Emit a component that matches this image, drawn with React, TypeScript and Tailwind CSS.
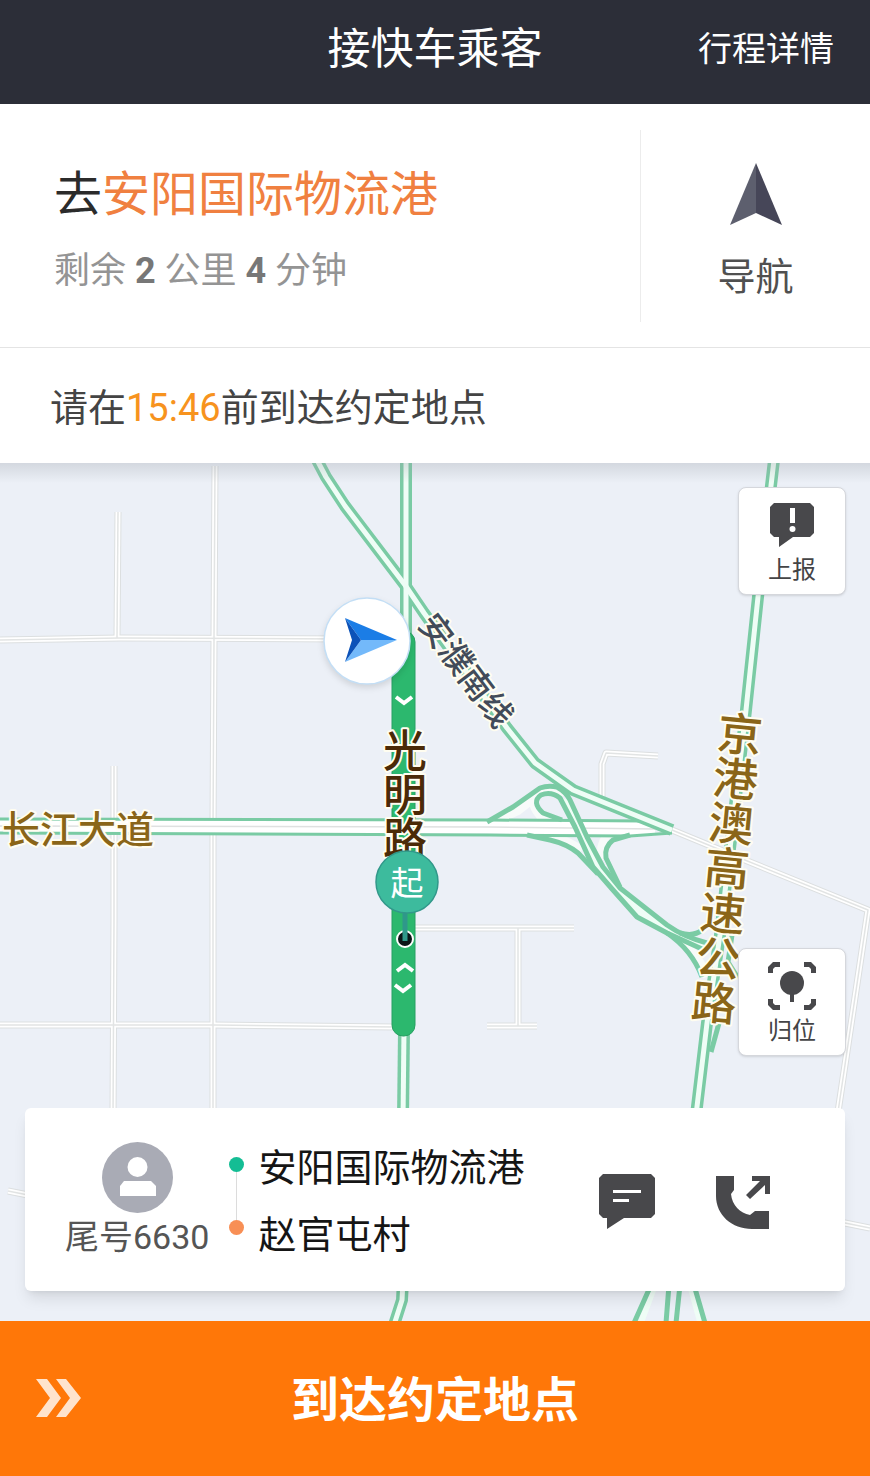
import type { ReactNode } from "react";

const FONT = "font-[Roboto,'Noto_Sans_CJK_SC',sans-serif]";

const localRoads = [
  "M118 512 L117 638",
  "M215 466 L214 640 L213 830 L213 1120",
  "M114 766 L114 920 L113 1120",
  "M0 640 L120 638 L345 639",
  "M0 1025 L213 1025 L395 1027",
  "M415 928 L574 928",
  "M518 928 L518 1026",
  "M487 1026 L537 1026",
  "M602 798 L602 764 L606 753 L658 756",
  "M672 830 L740 858 L868 910 L838 1112",
  "M8 1191 L28 1195",
  "M840 1222 L870 1228",
];

const mainRoads = [
  "M317 460 L326 477 L345 506 L405 585 L424 613 L507 728 L535 763 L573 790 L672 830",
  "M406 460 L406 640",
  "M404 1030 L403 1120",
  "M403 1280 L402 1300 L394 1325",
  "M774 460 L758 597 L746 710 L720 935 L707 1023 L696 1115",
];

// White road surface under the slip roads
const rampBeds = [
  "M492 823 L518 811 L541 793",
  "M558 823 L540 816 Q526 800 540 791 Q551 787 562 797",
  "M527 831 L552 835 Q570 842 582 850",
  "M626 831 L607 835 Q598 847 602 860",
  "M667 930 Q697 948 707 977",
];

const rampEdges = [
  "M487 822 L513 807 L540 788 Q548 785 557 787 Q566 792 570 800 L587 837 L603 867 L620 888 L667 925 Q684 937 707 943",
  "M562 820 L543 813 Q531 802 541 795 Q551 791 560 798 L575 827 L593 867 L613 890 L637 917 L667 933 L702 949",
  "M527 835 L550 840 Q567 844 578 853 L598 874",
  "M630 835 L613 840 Q604 847 606 858 L620 887",
  "M667 933 Q692 950 702 977",
  "M680 933 Q694 937 702 930",
  "M732 935 L728 962 L738 978",
  "M719 1023 L711 1052",
];

function RoadMap() {
  return (
    <svg
      className="absolute inset-0 h-full w-full"
      viewBox="0 463 870 858"
      preserveAspectRatio="xMidYMid slice"
      fill="none"
      aria-hidden="true"
    >
      <g strokeLinejoin="round">
        {localRoads.map((d) => <path key={d} d={d} stroke="#dcdfe0" strokeWidth="7" />)}
        {localRoads.map((d) => <path key={d} d={d} stroke="#fff" strokeWidth="5" />)}
        {localRoads.map((d) => <path key={d} d={d} stroke="#e2e4e4" strokeWidth="1.5" />)}
      </g>

      <g stroke="#f8fbfa" strokeWidth="8">
        {rampBeds.map((d) => <path key={d} d={d} />)}
      </g>

      {/* Changjiang avenue */}
      <path d="M0 826 L490 827 L655 829" stroke="#fff" strokeWidth="13" />
      <path d="M0 819 L490 820 L645 821 M0 833 L490 835 L630 836 L672 833" stroke="#7acba4" strokeWidth="3" />
      <path d="M0 826 L490 827 L655 829" stroke="#dfe1e1" strokeWidth="1.5" />

      <g strokeLinejoin="round">
        {mainRoads.map((d) => <path key={d} d={d} stroke="#7acba4" strokeWidth="12" />)}
        {mainRoads.map((d) => <path key={d} d={d} stroke="#effdf6" strokeWidth="5" />)}
      </g>

      {/* Interchange */}
      <path d="M560 798 L570 800 L587 837 L603 867 L620 888 L667 925 L707 943 L702 949 L667 933 L637 917 L613 890 L593 867 L575 827Z" fill="#effdf6" />
      <g stroke="#7acba4" strokeWidth="5" strokeLinejoin="round">
        {rampEdges.map((d) => <path key={d} d={d} />)}
      </g>
      <path d="M640 1325 L655 1285 M701 1325 L690 1285" stroke="#effdf6" strokeWidth="6" />
      <path d="M634 1323 L651 1285 M666 1323 L669 1285 M676 1323 L680 1285 M705 1323 L694 1285" stroke="#7acba4" strokeWidth="5" />

      {/* Planned route */}
      <rect x="392" y="631" width="23" height="405" rx="11" fill="#2cb86e" stroke="#27a062" />
      <g stroke="#fff" strokeWidth="4">
        <path d="M396 697 L404 703 L412 697" />
        <path d="M397 971 L405 965 L413 971" />
        <path d="M395 985 L403 991 L411 985" />
      </g>

      <g
        className="font-['Noto_Sans_CJK_SC',sans-serif] font-medium"
        textAnchor="middle"
        paintOrder="stroke"
        strokeLinejoin="round"
        stroke="#fffdf0"
        strokeWidth="4"
      >
        <text x="78" y="826" fontSize="38" fill="#8a6518" dominantBaseline="central">长江大道</text>
        <text className="[writing-mode:vertical-rl]" x="405" y="794" fontSize="44" fill="#4b2a07">光明路</text>
        <text
          className="[writing-mode:vertical-rl]"
          x="727"
          y="868"
          fontSize="45"
          fill="#8a6518"
          transform="rotate(5.5 727 868)"
        >
          京港澳高速公路
        </text>
        <text x="468" y="669" fontSize="33" fill="#424b59" dominantBaseline="central" transform="rotate(53 468 669)">
          安濮南线
        </text>
      </g>

      {/* Pickup pin */}
      <circle cx="405" cy="939" r="8" fill="#0b1517" stroke="#fff" strokeWidth="2" />
      <path d="M405 910 V941" stroke="#2f988a" strokeWidth="5" />
      <circle cx="407" cy="882" r="31" fill="#3dbb9d" stroke="#31988a" strokeWidth="1.5" />
      <text
        className="font-['Noto_Sans_CJK_SC',sans-serif]"
        x="407"
        y="881"
        fontSize="33"
        fill="#fff"
        textAnchor="middle"
        dominantBaseline="central"
      >
        起
      </text>

      {/* Driver position */}
      <circle className="drop-shadow-md" cx="367" cy="641" r="43" fill="#fff" stroke="#c3def5" strokeWidth="1.5" />
      <path d="M345 618 L397 640 L361 640Z" fill="#1b7de6" />
      <path d="M397 640 L345 662 L361 640Z" fill="#73b9fa" />
      <path d="M345 618 L361 640 L345 662 L352 640Z" fill="#0c52b8" />
    </svg>
  );
}

function MapButton({ label, children }: { label: string; children: ReactNode }) {
  return (
    <button className="flex h-[108px] w-[108px] flex-col items-center rounded-lg border border-[#d5d7dc] bg-white pt-3 text-2xl leading-8 text-[#444446] shadow-sm">
      <svg className="mb-1 h-[50px] w-[50px]" viewBox="0 0 50 50" fill="#48484b" aria-hidden="true">
        {children}
      </svg>
      {label}
    </button>
  );
}

function TripCard() {
  return (
    <section className="mx-[25px] mb-[30px] flex items-center rounded-md bg-white pb-[30px] pl-10 pr-[74px] pt-[34px] shadow-lg">
      <div className="flex flex-col items-center">
        <svg className="h-[71px] w-[71px]" viewBox="0 0 71 71" aria-hidden="true">
          <circle cx="35.5" cy="35.5" r="35.5" fill="#a9abb5" />
          <circle cx="35.5" cy="25" r="10" fill="#fff" />
          <path d="M18 54 V44 L22 39 H49 L54 44 V54Z" fill="#fff" />
        </svg>
        <span className="text-[34px] leading-[48px] text-[#555]">尾号6630</span>
      </div>
      <div className="ml-5 flex flex-col items-center pb-3">
        <span className="h-[15px] w-[15px] rounded-full bg-[#14bd94]" />
        <span className="h-12 w-px bg-[#dcdcdc]" />
        <span className="h-[15px] w-[15px] rounded-full bg-[#f88f55]" />
      </div>
      <div className="ml-[14px] flex flex-1 flex-col gap-[19px] text-[38px] leading-[48px] text-[#151515]">
        <p>安阳国际物流港</p>
        <p>赵官屯村</p>
      </div>
      <div className="flex gap-[60px]">
        <button aria-label="发消息">
          <svg className="h-14 w-14" viewBox="0 0 56 56" fill="#48484b" aria-hidden="true">
            <path d="M4 0 H52 L56 4 V40 L52 44 H25 L8 55 V44 H4 L0 40 V4Z" />
            <path d="M14 16 H42 V19 H14Z M14 25 H30 V28 H14Z" fill="#fff" />
          </svg>
        </button>
        <button aria-label="打电话">
          <svg className="h-14 w-14" viewBox="0 0 56 56" fill="#48484b" aria-hidden="true">
            <path d="M1 2 H19 V16 L16 20 C17 31 25 39 35 41 L40 37 H54 V55 H37 C17 55 1 41 1 22Z" />
            <path d="M37 2 H55 V20 H50 V11 L35 25 L31 21 L45 7 H37Z" />
          </svg>
        </button>
      </div>
    </section>
  );
}

export default function App() {
  return (
    <div className={`flex min-h-screen flex-col bg-white ${FONT}`}>
      <header className="grid h-[104px] grid-cols-[1fr_auto_1fr] items-center bg-[#2c2e38] px-9 pb-[6px] text-white">
        <h1 className="col-start-2 text-[43px] leading-[60px]">接快车乘客</h1>
        <button className="justify-self-end text-[34px] leading-[48px]">行程详情</button>
      </header>

      <section className="flex h-[244px] items-center border-b border-[#e4e4e4]">
        <div className="flex-1 pl-[54px] pt-2">
          <h2 className="text-5xl leading-[64px] text-[#2b2b2b]">
            去<span className="text-[#f08040]">安阳国际物流港</span>
          </h2>
          <p className="mt-[18px] text-4xl leading-[52px] text-[#949494]">
            剩余 <b className="text-[#777]">2</b> 公里 <b className="text-[#777]">4</b> 分钟
          </p>
        </div>
        <button className="flex h-48 w-[230px] flex-col items-center justify-center border-l border-[#ececec] pt-[14px] text-[38px] leading-[52px] text-[#505050]">
          <svg className="mb-[26px] h-[62px] w-[52px]" viewBox="0 0 52 62" aria-hidden="true">
            <path d="M26 0 L0 62 L26 50Z" fill="#5d5f6e" />
            <path d="M26 0 L52 62 L26 50Z" fill="#464658" />
          </svg>
          导航
        </button>
      </section>

      <p className="px-[50px] pb-[29px] pt-[34px] text-[38px] leading-[52px] text-[#444]">
        请在<span className="text-[#f7931e]">15:46</span>前到达约定地点
      </p>

      <main className="relative flex flex-1 flex-col overflow-hidden bg-[#ecf0f7]">
        <RoadMap />
        <div className="absolute inset-x-0 top-0 h-5 bg-linear-to-b from-[#9aa0a84d] to-transparent" />
        <div className="relative flex flex-1 flex-col items-end justify-between pb-[52px] pr-6 pt-6">
          <MapButton label="上报">
            <path d="M7 3 H43 L47 7 V33 L43 37 H26 L12 47 V37 H7 L3 33 V7Z" />
            <path d="M23 8 H28 V23 H23Z" fill="#fff" />
            <circle cx="25.5" cy="29" r="3" fill="#fff" />
          </MapButton>
          <MapButton label="归位">
            <circle cx="25" cy="22" r="12" />
            <path d="M23 32 H27 V41 H23Z" />
            <path d="M1 12 V6 L6 1 H13 V6 H8 L6 8 V12Z M49 12 V6 L44 1 H37 V6 H42 L44 8 V12Z M1 38 V44 L6 49 H13 V44 H8 L6 42 V38Z M49 38 V44 L44 49 H37 V44 H42 L44 42 V38Z" />
          </MapButton>
        </div>
        <div className="relative">
          <TripCard />
        </div>
      </main>

      <button className="grid h-[155px] grid-cols-[1fr_auto_1fr] items-center bg-[#ff7708] px-9 text-5xl font-bold leading-[64px] text-white">
        <svg className="h-10 w-[46px]" viewBox="0 0 46 40" fill="#ffe3cc" aria-hidden="true">
          <path d="M0 0 H11 L25 19 L11 38 H0 L14 19Z M20 0 H30 L45 19 L30 38 H20 L34 19Z" />
        </svg>
        <span className="pt-1">到达约定地点</span>
      </button>
    </div>
  );
}
